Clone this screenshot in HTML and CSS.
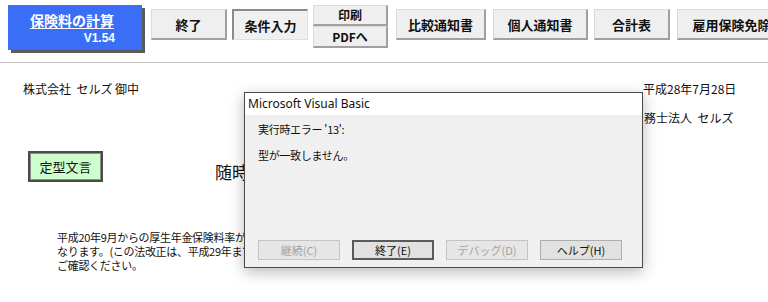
FILE: index.html
```html
<!DOCTYPE html>
<html lang="ja">
<head>
<meta charset="utf-8">
<title>保険料の計算</title>
<link rel="stylesheet" href="styles.css">
</head>
<body>
<div class="toolbar">
  <div class="brand">
    <span class="brand-title">保険料の計算</span>
    <span class="brand-ver">V1.54</span>
  </div>
  <button class="tb w76 gap9">終了</button>
  <button class="tb w76 gap5 pressed">条件入力</button>
  <div class="stack gap5">
    <button class="tb half">印刷</button>
    <button class="tb half">PDFへ</button>
  </div>
  <button class="tb w90 gap8">比較通知書</button>
  <button class="tb w95 gap7">個人通知書</button>
  <button class="tb w76 gap6">合計表</button>
  <button class="tb w110 gap7">雇用保険免除</button>
</div>
<div class="rule"></div>
<div class="sheet">
  <div class="head">
    <div class="addr">株式会社&nbsp; セルズ 御中</div>
    <div class="from">
      <div>平成28年7月28日</div>
      <div class="office">務士法人&nbsp; セルズ</div>
    </div>
  </div>
  <div class="mid">
    <div class="green">定型文言</div>
    <div class="big">随時</div>
  </div>
  <div class="para">
    <div>平成20年9月からの厚生年金保険料率が</div>
    <div>なります。(この法改正は、平成29年まで</div>
    <div>ご確認ください。</div>
  </div>

  <div class="dialog">
    <div class="dlg-title">Microsoft Visual Basic</div>
    <div class="dlg-body">
      <div class="msg first">実行時エラー '13':</div>
      <div class="msg">型が一致しません。</div>
    </div>
    <div class="dlg-buttons">
      <button class="db disabled">継続(C)</button>
      <button class="db default">終了(E)</button>
      <button class="db disabled">デバッグ(D)</button>
      <button class="db">ヘルプ(H)</button>
    </div>
  </div>
</div>
</body>
</html>
```
FILE: styles.css
```css
html, body {
  margin: 0;
  padding: 0;
  background: #ffffff;
  width: 768px;
  height: 302px;
  overflow: hidden;
  font-family: "Noto Sans CJK JP", "Noto Sans", sans-serif;
  color: #111;
}

.toolbar {
  display: flex;
  align-items: flex-start;
  height: 62px;
  padding-left: 8px;
  box-sizing: border-box;
  white-space: nowrap;
  overflow: hidden;
}

.brand {
  margin-top: 5px;
  width: 134px;
  height: 45px;
  box-sizing: border-box;
  background: #3b6ef6;
  box-shadow: 3px 3px 0 #5a5a5a;
  display: flex;
  flex-direction: column;
  align-items: flex-end;
  padding: 6px 27px 0 0;
  flex: none;
}

.brand-title {
  color: #fff;
  font-weight: bold;
  font-size: 14px;
  line-height: 18px;
  text-decoration: underline;
  text-underline-offset: 2px;
  margin-right: 1px;
}

.brand-ver {
  color: #fff;
  font-weight: bold;
  font-size: 12px;
  line-height: 15px;
  margin-top: 2px;
  font-family: "Liberation Sans", sans-serif;
}

.tb {
  flex: none;
  margin-top: 9px;
  height: 31px;
  box-sizing: border-box;
  background: #efefef;
  border: 1px solid #dadada;
  border-right: 2px solid #a0a0a0;
  border-bottom: 2px solid #a0a0a0;
  font-family: "Noto Sans CJK JP", sans-serif;
  font-weight: bold;
  font-size: 13px;
  color: #111;
  padding: 0;
  line-height: 1;
  overflow: hidden;
}

.tb.pressed {
  border: 2px solid #8a8a8a;
  border-right: 1px solid #e0e0e0;
  border-bottom: 1px solid #e0e0e0;
  background: #f0f0f0;
}

.w76 { width: 76px; }
.w90 { width: 90px; }
.w95 { width: 95px; }
.w110 { width: 110px; }
.gap5 { margin-left: 5px; }
.gap6 { margin-left: 6px; }
.gap7 { margin-left: 7px; }
.gap8 { margin-left: 8px; }
.gap9 { margin-left: 9px; }

.stack {
  flex: none;
  display: flex;
  flex-direction: column;
  margin-top: 5px;
  width: 75px;
}

.stack .tb.half {
  margin-top: 0;
  width: 75px;
  height: 21px;
  font-size: 12px;
}

.stack .tb.half + .tb.half {
  height: 22px;
}

.rule {
  height: 1px;
  background: #c6c6c6;
}

.sheet {
  position: relative;
  height: 239px;
}

.head {
  display: flex;
  justify-content: space-between;
  padding: 11px 31px 0 23px;
  font-size: 12px;
  line-height: 29px;
}

.from {
  text-align: left;
  width: 94px;
}

.office {
  margin-left: 1px;
}

.mid {
  display: flex;
  align-items: flex-end;
  margin-top: 19px;
  padding-left: 28px;
}

.green {
  width: 75px;
  height: 31px;
  box-sizing: border-box;
  background: #ccffcc;
  border: 2px solid #4a4a4a;
  box-shadow: inset 0 0 0 1px #8c8c8c;
  font-size: 13px;
  display: flex;
  align-items: center;
  justify-content: center;
}

.big {
  margin-left: 112px;
  width: 29px;
  overflow: hidden;
  white-space: nowrap;
  font-size: 17px;
  line-height: 22px;
  margin-bottom: -1px;
}

.para {
  margin-top: 48px;
  margin-left: 57px;
  width: 187px;
  overflow: hidden;
  font-size: 11px;
  letter-spacing: -0.3px;
  line-height: 14px;
  white-space: nowrap;
}

.dialog {
  position: absolute;
  left: 244px;
  top: 29px;
  width: 399px;
  height: 176px;
  box-sizing: border-box;
  border: 1px solid #4a4a4a;
  background: #f0f0f0;
  box-shadow: 0 4px 14px rgba(0, 0, 0, 0.28);
  display: flex;
  flex-direction: column;
  font-family: "Noto Sans", "Noto Sans CJK JP", sans-serif;
}

.dlg-title {
  background: #ffffff;
  height: 22px;
  line-height: 22px;
  padding-left: 3px;
  font-size: 12px;
  color: #111;
}

.dlg-body {
  padding: 6px 0 0 13px;
  flex: 1;
}

.msg {
  font-family: "Noto Sans CJK JP", sans-serif;
  font-size: 11px;
  line-height: 16px;
  letter-spacing: -0.3px;
  color: #111;
}

.msg + .msg {
  margin-top: 10px;
}

.dlg-buttons {
  display: flex;
  gap: 12px;
  padding: 0 0 7px 13px;
}

.db {
  width: 82px;
  height: 20px;
  box-sizing: border-box;
  background: #e1e1e1;
  border: 1px solid #adadad;
  font-family: "Noto Sans CJK JP", sans-serif;
  font-size: 11px;
  color: #111;
  padding: 0;
  line-height: 1;
}

.db.default {
  border: 2px solid #5a5a5a;
}

.db.disabled {
  color: #a3a3a3;
  border-color: #c4c4c4;
  background: #e6e6e6;
}
```
